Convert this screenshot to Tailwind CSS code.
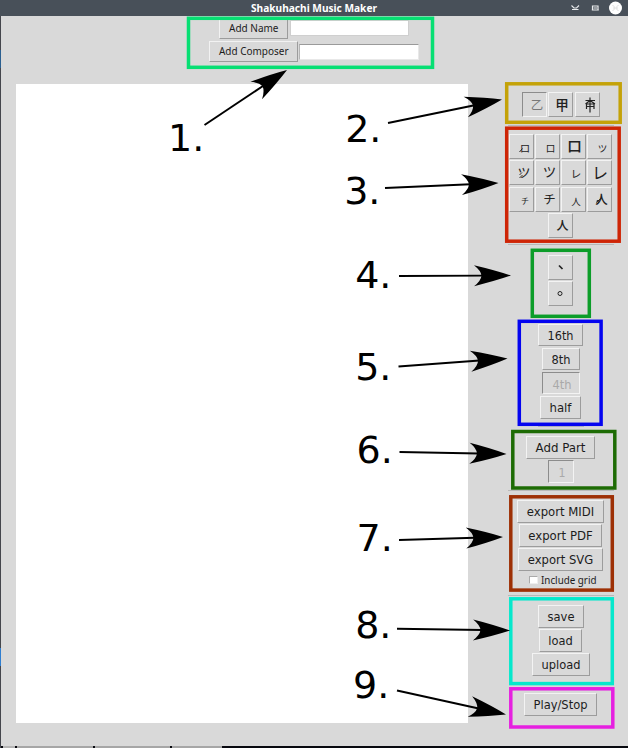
<!DOCTYPE html>
<html lang="en">
<head>
<meta charset="utf-8">
<title>Shakuhachi Music Maker</title>
<script src="https://cdn.jsdelivr.net/npm/@tailwindcss/browser@4"></script>
</head>
<body class="w-[628px] h-[748px] overflow-hidden bg-[#d9d9d9] text-[#1c1c1c]">
<div class="relative flex flex-col w-[628px] h-[748px]">
  <header class="grid grid-cols-[1fr_auto_1fr] items-center h-4 shrink-0 bg-[#485059] text-white">
    <span></span>
    <h1 class="font-bold"><svg class="block overflow-visible" width="128" height="16"><text x="1" y="12" textLength="126" lengthAdjust="spacingAndGlyphs" fill="#fff" font-family="Noto Sans, sans-serif" font-size="10.5">Shakuhachi Music Maker</text></svg></h1>
    <div class="flex justify-end items-center">
      <svg width="66" height="16" fill="none" stroke="#e8eaec"><path d="M9.500 5.500l2.500 2.500h2.500l2.500-2.500M10 9.500h6.500" stroke-width="1.100"/><path d="M30.500 10.500V6h5.500v4.500M29.800 10h7M31.500 8h3.500" stroke-width="1.200"/><circle cx="53.500" cy="8" r="6.500" fill="#fff" stroke="none"/><path d="M50.500 5l1.500 1.500v3L50.500 11M56.500 5L55 6.500v3l1.500 1.500M52 8h3" stroke="#dedede"/></svg>
    </div>
  </header>

  <section class="flex flex-col h-[68px] shrink-0">
    <div class="flex items-center h-[22px] mt-[1px] ml-[219px]">
      <button class="w-[69px] h-[22px] border border-t-[#f2f2f2] border-l-[#f2f2f2] border-b-[#9c9c9c] border-r-[#9c9c9c]"><svg class="block overflow-visible" width="67" height="20"><text x="9" y="14" textLength="49.500" lengthAdjust="spacingAndGlyphs" font-family="Noto Sans, sans-serif" font-size="11" fill="#1c1c1c">Add Name</text></svg></button>
      <input class="ml-[2px] w-[119px] h-[16px] bg-white border border-[#cfcfcf]">
    </div>
    <div class="flex items-center h-[22px] ml-[209px]">
      <button class="w-[89px] h-[21px] mt-[3px] border border-t-[#f2f2f2] border-l-[#f2f2f2] border-b-[#9c9c9c] border-r-[#9c9c9c]"><svg class="block overflow-visible" width="87" height="19"><text x="9" y="13" textLength="69.500" lengthAdjust="spacingAndGlyphs" font-family="Noto Sans, sans-serif" font-size="11" fill="#1c1c1c">Add Composer</text></svg></button>
      <input class="ml-[1px] mt-[3px] w-[120px] h-[16px] bg-white border border-t-[#9a9a9a] border-l-[#b5b5b5] border-b-[#e8e8e8] border-r-[#e8e8e8]">
    </div>
  </section>

  <main class="flex h-[639px] shrink-0">
    <div class="ml-4 w-[452px] bg-white"></div>
    <aside class="ml-[25px] w-[135px] flex flex-col items-center leading-none">
      <div class="flex gap-[1.500px] mt-[8px]" id="registers"></div>
      <div class="w-[106px] h-px mt-[8px] bg-[#b8b8b8]"></div>
      <div class="flex flex-wrap justify-center gap-[1.300px] w-[106px] mt-[8px]" id="notes"></div>
      <div class="w-[106px] h-px mt-[6px] bg-[#b8b8b8]"></div>
      <div class="flex flex-col gap-[1.500px] mt-[10px]" id="marks"></div>
      <div class="flex flex-col items-center gap-[2px] mt-[18px]" id="lengths"></div>
      <div class="w-[46px] h-px mt-[7px] bg-[#b8b8b8]"></div>
      <div class="flex flex-col items-center gap-[1px] mt-[9px]" id="parts"></div>
      <div class="w-[106px] h-px mt-[7px] bg-[#b8b8b8]"></div>
      <div class="flex flex-col items-center gap-[1px] mt-[9px]" id="exports"></div>
      <label class="flex items-center h-[14px] mt-[2px] ml-[4px]"><span class="block w-[9px] h-[8px] bg-white border border-t-[#aaa] border-l-[#aaa] border-b-[#eee] border-r-[#eee]"></span><svg class="ml-[3px] overflow-visible" width="56" height="14"><text x="0" y="10.500" textLength="55.500" lengthAdjust="spacingAndGlyphs" font-family="Noto Sans, sans-serif" font-size="10.500" fill="#1c1c1c">Include grid</text></svg></label>
      <div class="w-[106px] h-px mt-[8px] bg-[#b8b8b8]"></div>
      <div class="flex flex-col items-center gap-[1px] mt-[9px]" id="files"></div>
      <div class="flex flex-col items-center mt-[17px]" id="playback"></div>
    </aside>
  </main>

  <footer class="mt-auto h-[2px] shrink-0 bg-[#08090f] flex">
    <div class="w-[3px]"></div><div class="w-[12px] bg-[#b5b5b5]"></div><div class="ml-[2px] w-[76px] bg-[#a6a6a6]"></div><div class="ml-[2px] w-[75px] bg-[#a6a6a6]"></div><div class="ml-[2px] w-[50px] bg-[#a6a6a6]"></div>
  </footer>

  <div class="absolute left-0 top-4 w-px h-[732px] bg-[#44464c]"></div>
  <div class="absolute left-0 top-[648px] w-px h-[18px] bg-[#2f7ed0]"></div>
  <div class="absolute left-0 top-[50px] w-px h-[18px] bg-[#2b5f90]"></div>

  <svg class="absolute inset-0" width="628" height="748" id="annotations">
    <g fill="none" stroke-width="3.500">
      <rect x="188.500" y="18.300" width="244" height="49" stroke="#07df73"/>
      <rect x="506.700" y="83.800" width="113.500" height="38.500" stroke="#c4a208"/>
      <rect x="506.700" y="128.200" width="112.500" height="113" stroke="#ce2506"/>
      <rect x="532.300" y="250.300" width="57" height="66" stroke="#0c9d29"/>
      <rect x="519.300" y="321.300" width="81.800" height="103" stroke="#0505f0"/>
      <rect x="512.800" y="431.500" width="102" height="56.500" stroke="#1d6b04"/>
      <rect x="510.800" y="496.800" width="101.500" height="93.300" stroke="#9d3005"/>
      <rect x="510.800" y="598.800" width="101.500" height="84.800" stroke="#06e8cc"/>
      <rect x="510.800" y="688.800" width="102" height="38.200" stroke="#e620e0"/>
    </g>
    <g id="arrows" stroke="#000" stroke-width="2"></g>
    <g font-family="DejaVu Sans, sans-serif" font-size="38" fill="#000">
      <text x="168" y="151">1.</text><text x="345.200" y="141.700">2.</text><text x="344.200" y="204">3.</text>
      <text x="355.200" y="287.700">4.</text><text x="355.200" y="380">5.</text><text x="356.500" y="462.800">6.</text>
      <text x="356.500" y="550.800">7.</text><text x="355.200" y="637.800">8.</text><text x="353" y="698">9.</text>
    </g>
  </svg>
</div>
<script>
const raised = "block shrink-0 border border-t-[#f3f3f3] border-l-[#f3f3f3] border-b-[#9c9c9c] border-r-[#9c9c9c]";
const sunken = "block shrink-0 border border-t-[#8c8c8c] border-l-[#8c8c8c] border-b-[#f3f3f3] border-r-[#f3f3f3]";
const add = (id, html) => document.getElementById(id).insertAdjacentHTML("beforeend", html);

// Icon buttons: glyph, centre, size, weight, colour and an optional extra stroke.
const icon = (id, glyph, cx, cy, size, o = {}) => add(id,
  `<button class="${o.down ? sunken : raised} w-[25px] h-[25px]"><svg class="block overflow-visible" width="23" height="23">` +
  (glyph ? `<text x="${cx}" y="${cy + size * 0.38}" text-anchor="middle" font-family="Noto Sans CJK JP, sans-serif" font-size="${size}" font-weight="${o.w || 400}" fill="${o.c || '#222'}">${glyph}</text>` : "") +
  (o.d ? `<path d="${o.d}" fill="none" stroke="#222" stroke-width="${o.sw || 1}"/>` : "") + `</svg></button>`);
icon("registers", "乙", 14, 12, 12.5, {down: 1, c: "#777"});
icon("registers", "甲", 13, 12, 13.5, {w: 500});
icon("registers", "", 0, 0, 0, {d: "M9.500 7.500H19M14 4.500v15M14 7.500L9.500 11M14 7.500l5 3.500M10.500 16v-5h7.500v5M10.500 13.500h7.500", sw: 1.2});
icon("notes", "ロ", 15, 13, 10.5, {d: "M9.500 17l3-3.500"});
icon("notes", "ロ", 14.5, 13, 10);
icon("notes", "ロ", 12.5, 11.5, 15.5, {w: 500});
icon("notes", "ツ", 14.5, 13, 9.5);
icon("notes", "ツ", 14, 11, 13, {d: "M9.500 14l2.500-2.500M9.500 17l3-3", sw: .9});
icon("notes", "ツ", 13.5, 11, 13.5);
icon("notes", "レ", 14, 13, 10.5);
icon("notes", "レ", 12, 11.5, 16);
icon("notes", "チ", 15, 12.5, 8);
icon("notes", "チ", 13.5, 11, 12.5);
icon("notes", "人", 14, 13, 9.5);
icon("notes", "人", 13.5, 11, 12.5, {w: 500, d: "M8 14.500l5-4M9 12l2 3"});
icon("notes", "人", 13.5, 11, 12, {w: 500});
icon("marks", "", 0, 0, 0, {d: "M10 9.500l3.500 3.500", sw: 1.7});
icon("marks", "", 0, 0, 0, {d: "M13 11.500a2 2 0 1 1-4 0a2 2 0 1 1 4 0"});

// Text buttons: width, height, label, label width.
const btn = (id, w, h, label, tw, down) => add(id,
  `<button class="${down ? sunken : raised}" style="width:${w}px;height:${h}px"><svg class="block overflow-visible" width="${w - 2}" height="${h - 2}"><text x="${(w - 2) / 2 + (down ? 1 : 0)}" y="${down ? 15.5 : 14.5}" text-anchor="middle" textLength="${tw}" lengthAdjust="spacingAndGlyphs" font-family="DejaVu Sans, sans-serif" font-size="11.6" fill="${down ? '#a9a9a9' : '#1c1c1c'}">${label}</text></svg></button>`);
btn("lengths", 45, 22, "16th", 26);
btn("lengths", 38, 22, "8th", 19);
btn("lengths", 38, 22, "4th", 19, true);
btn("lengths", 41, 23, "half", 22);
btn("parts", 69, 23, "Add Part", 50);
btn("parts", 26, 23, "1", 7, true);
btn("exports", 87, 23, "export MIDI", 67.5);
btn("exports", 83, 23, "export PDF", 64.5);
btn("exports", 85, 23, "export SVG", 65.5);
btn("files", 46, 23, "save", 27);
btn("files", 43, 23, "load", 24.5);
btn("files", 58, 23, "upload", 39);
btn("playback", 73, 23, "Play/Stop", 54);

// Arrows: shaft from (x1, y1), barbed head with its tip at (x2, y2).
[[204.5,125,287,70],[388,123,502,99.5],[385,188,498.5,183],[399,276,511,275.5],[398.5,366.5,507.5,358.5],
 [399.5,452,506.5,454],[399,540,503,537],[397,628.8,510,630.5],[397,690.5,506,714.5]].forEach(([x1,y1,x2,y2]) => {
  const a = Math.atan2(y2 - y1, x2 - x1) * 180 / Math.PI, len = Math.hypot(x2 - x1, y2 - y1);
  document.getElementById("arrows").insertAdjacentHTML("beforeend",
    `<g transform="translate(${x2} ${y2}) rotate(${a})"><path d="M${-len} 0H-28"/><path stroke="none" d="M0 0Q-16 -5.500 -37 -10.500Q-30 -5 -29.500 0Q-30 5 -37 10.500Q-16 5.500 0 0Z"/></g>`);
});
</script>
</body>
</html>
